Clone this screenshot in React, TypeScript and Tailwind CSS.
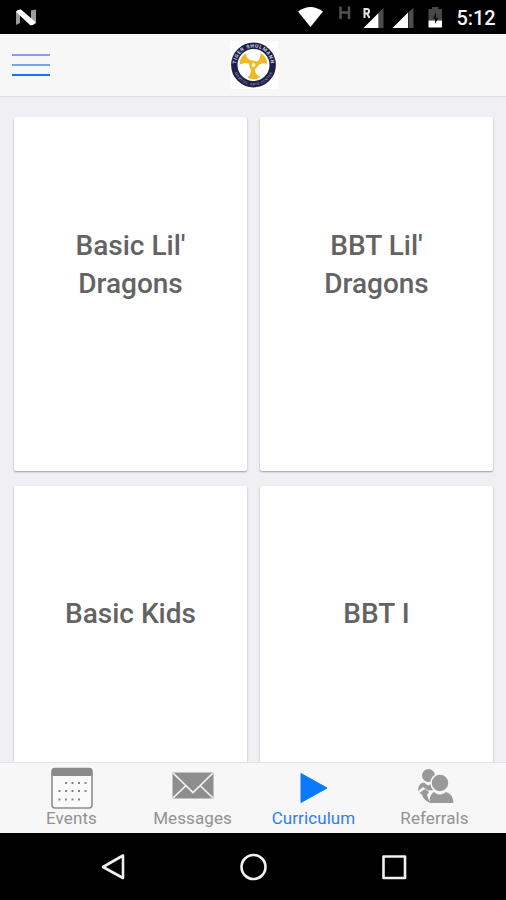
import React from 'react';

const cards = ["Basic Lil' Dragons", "BBT Lil' Dragons", 'Basic Kids', 'BBT I'];

function StatusBar() {
  return (
    <div className="flex h-[34px] shrink-0 items-start bg-black">
      <svg className="h-[34px] w-[506px]" viewBox="0 0 506 34">
        <path d="M16 11.5 L20 10 V23 L16 25Z M31 10.5 L36 9.5 V24 L31 20Z" fill="#9b9b9b" />
        <path d="M16 12 Q17 9 21 9.5 L35.5 22 Q34 26 30 25Z" fill="#fff" />
        <path d="M298 11.5 Q310.5 2.5 323 11.5 L310.5 27Z" fill="#fff" />
        <path d="M340.5 6.5 V19 M349 6.5 V19 M340.5 12.5 H349" stroke="#505050" strokeWidth="2.5" fill="none" />
        <path d="M379 12 L383.5 8 V28 H379Z M408.5 12 L413.5 8 V28 H408.5Z" fill="#4c4c4c" />
        <path d="M363.5 28 L378.5 13 V28Z M392.5 28 L408 12.5 V28Z" fill="#fff" />
        <path d="M364.5 18 V9 H367 Q369 9 369 11.3 Q369 13.5 367 13.5 H365 M367 13.5 L369.5 18" stroke="#e6e6e6" strokeWidth="2" fill="none" />
        <path d="M432 7 H438.5 V9 H442 V20.5 H428.5 V9 H432Z" fill="#484848" />
        <path d="M428.5 20.5 H442 V27 Q442 27.5 441 27.5 H429.5 Q428.5 27.5 428.5 27Z" fill="#fff" />
        <path d="M436 12 L433 18.5 H435 V24 L438.5 17.5 H436Z" fill="#111" />
        <text x="456.5" y="25" fill="#f4f4f4" fontSize="20" fontWeight="500" textLength="39" fontFamily="Roboto, sans-serif">5:12</text>
      </svg>
    </div>
  );
}

function Logo() {
  return (
    <svg className="h-[48px] w-[48px]" viewBox="0 0 48 48">
      <rect width="48" height="48" fill="#fff" />
      <circle cx="23.5" cy="24" r="19.2" fill="none" stroke="#1b2148" strokeWidth="6.4" />
      <defs>
        <path id="ring-top" d="M6 24 A17.5 17.5 0 0 1 41 24" />
        <path id="ring-bottom" d="M3 24 A20.5 20.5 0 0 0 44 24" />
      </defs>
      <text fill="#d4d5df" fontSize="5" fontWeight="700" fontFamily="Roboto, sans-serif">
        <textPath href="#ring-top" startOffset="1" textLength="52">TIGER SHULMANN</textPath>
      </text>
      <text fill="#a8abc0" fontSize="3.5" fontFamily="Roboto, sans-serif">
        <textPath href="#ring-bottom" startOffset="8" textLength="48">MARTIAL ARTS CENTER</textPath>
      </text>
      <g fill="#f0b925" transform="rotate(-14 23.5 24)">
        <path id="blade" d="M20.5 25.5 Q20 20.5 16 20 Q12.5 19.6 10 20.5 Q11.5 13.5 18.5 11 Q18.5 16 21 18 Q24 20 26.5 21.5Z" />
        <use href="#blade" transform="rotate(120 23.5 24)" />
        <use href="#blade" transform="rotate(240 23.5 24)" />
        <circle cx="23.5" cy="24" r="4.3" />
      </g>
      <circle cx="23.5" cy="24" r="1.9" fill="#fff3d0" />
    </svg>
  );
}

function Header() {
  return (
    <header className="flex h-[63px] shrink-0 items-center border-b border-[#dedee1] bg-[#f7f7f7]">
      <button aria-label="Menu" className="ml-3 flex w-[38px] flex-col gap-2">
        <span className="h-[2px] bg-[#819fee]" />
        <span className="h-[2px] bg-[#78a1f4]" />
        <span className="h-[2px] bg-[#1874f2]" />
      </button>
      <div className="ml-[180px]"><Logo /></div>
    </header>
  );
}

const EventsIcon = () => (
  <svg className="h-[42px] w-[42px]" viewBox="0 0 42 42">
    <rect x="1" y="1.5" width="40" height="39.5" rx="3" fill="#fafafa" stroke="#8d8d8d" strokeWidth="1.6" />
    <path d="M1 9 V4 Q1 1 4 1 H38 Q41 1 41 4 V9Z" fill="#8a8a8a" />
    <path d="M14 16H36M7.5 24H36M7.5 32.5H29" stroke="#858585" strokeWidth="2.2" strokeDasharray="2 4.5" />
  </svg>
);

const MessagesIcon = () => (
  <svg className="h-[42px] w-[42px]" viewBox="0 0 42 42">
    <rect x="0.5" y="5.5" width="41" height="26" fill="#8e8e8e" />
    <path d="M1 6 L21 25.5 L41 6 M1 31 L14 18.5 M41 31 L28 18.5" stroke="#f4f4f4" strokeWidth="1.7" fill="none" />
  </svg>
);

const CurriculumIcon = () => (
  <svg className="h-[42px] w-[42px]" viewBox="0 0 42 42">
    <path d="M8 6.5 L34 21 L8 35.5Z" fill="#087aff" stroke="#087aff" strokeWidth="1" strokeLinejoin="round" />
  </svg>
);

const ReferralsIcon = () => (
  <svg className="h-[42px] w-[42px]" viewBox="0 0 42 42">
    <g fill="#999">
      <circle cx="14.5" cy="8.5" r="6.5" />
      <path d="M4 24 Q4 16 10 15.5 L14 18.5 L17 17 L17 19 Q19 22 20 23 L14 23.5 L9 20Z" />
      <path d="M5.5 26 L11 22 L15 25 L13 28 L16 36 Q9 33 8 27.5Z" />
      <path d="M15.5 36 Q15.5 27 20 25 Q26 30 32 25 Q39 27 39.5 36Z" />
      <circle cx="26" cy="16" r="9" stroke="#f7f7f7" strokeWidth="1.5" />
    </g>
  </svg>
);

const tabs = [
  { label: 'Events', Icon: EventsIcon, color: 'text-[#929292]' },
  { label: 'Messages', Icon: MessagesIcon, color: 'text-[#929292]' },
  { label: 'Curriculum', Icon: CurriculumIcon, color: 'text-[#2c7cfb]' },
  { label: 'Referrals', Icon: ReferralsIcon, color: 'text-[#929292]' },
];

export default function App() {
  return (
    <div className="flex h-[900px] w-[506px] flex-col overflow-hidden bg-[#efeff4] font-['Roboto',sans-serif]">
      <StatusBar />
      <Header />
      <main className="grid min-h-0 flex-1 auto-rows-[353.6px] grid-cols-[233px_233px] gap-x-[13px] gap-y-[15px] overflow-hidden px-[14px] pt-[20px]">
        {cards.map((title) => (
          <article key={title} className="rounded-[2px] bg-white px-12 pt-[109.6px] text-center shadow-[0_1px_2px_rgba(0,0,0,0.35)]">
            <h2 className="text-[28px] leading-[38px] font-medium text-[#636364]">{title}</h2>
          </article>
        ))}
      </main>
      <nav className="flex h-[71px] shrink-0 border-t border-[#e2e2e4] bg-[#f7f7f7] px-[11px]">
        {tabs.map(({ label, Icon, color }) => (
          <div key={label} className="flex flex-1 flex-col items-center pt-[4px]">
            <Icon />
            <span className={`text-[17px] leading-[18px] tracking-[0.09px] ${color}`}>{label}</span>
          </div>
        ))}
      </nav>
      <div className="flex h-[67px] shrink-0 items-start bg-black">
        <svg className="h-[67px] w-[506px]" viewBox="0 0 506 67" fill="none" stroke="#f1f1f1" strokeWidth="2.6" strokeLinejoin="round">
          <path d="M123 22.5 V45 L103 34Z" />
          <circle cx="253.5" cy="34" r="12" />
          <rect x="383.5" y="23.5" width="21.5" height="21.5" />
        </svg>
      </div>
    </div>
  );
}
